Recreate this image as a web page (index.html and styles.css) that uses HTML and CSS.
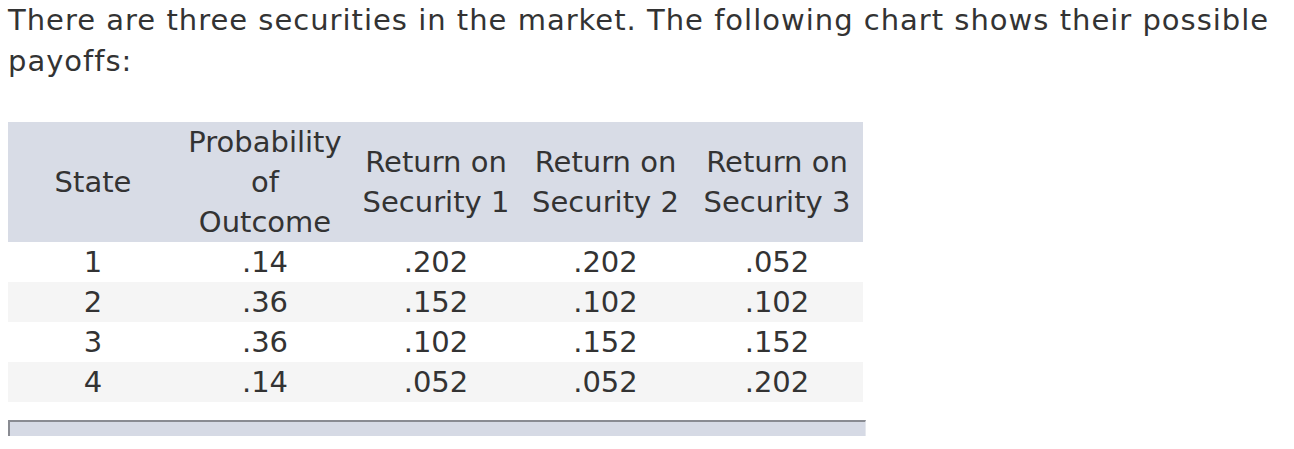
FILE: index.html
```html
<!DOCTYPE html>
<html>
<head>
<meta charset="utf-8">
<link rel="stylesheet" href="styles.css">
</head>
<body>
<p class="intro">There are three securities in the market. The following chart shows their possible payoffs:</p>
<table class="payoffs">
  <thead>
    <tr>
      <th class="c1">State</th>
      <th class="c2">Probability<br>of<br>Outcome</th>
      <th class="c3">Return on<br>Security 1</th>
      <th class="c4">Return on<br>Security 2</th>
      <th class="c5">Return on<br>Security 3</th>
    </tr>
  </thead>
  <tbody>
    <tr><td>1</td><td>.14</td><td>.202</td><td>.202</td><td>.052</td></tr>
    <tr class="alt"><td>2</td><td>.36</td><td>.152</td><td>.102</td><td>.102</td></tr>
    <tr><td>3</td><td>.36</td><td>.102</td><td>.152</td><td>.152</td></tr>
    <tr class="alt"><td>4</td><td>.14</td><td>.052</td><td>.052</td><td>.202</td></tr>
  </tbody>
</table>
<div class="bar"></div>
</body>
</html>
```
FILE: styles.css
```css
html, body {
  margin: 0;
  padding: 0;
  background: #fff;
}
body {
  padding: 0 8px;
  font-family: "DejaVu Sans", "Liberation Sans", sans-serif;
  color: #333;
  font-size: 29px;
}
.intro {
  margin: 0;
  line-height: 41px;
  letter-spacing: 1px;
}
.payoffs {
  margin-top: 40px;
  border-collapse: collapse;
  width: 855px;
  table-layout: fixed;
}
.payoffs th {
  background: #d8dce6;
  font-weight: normal;
  line-height: 40px;
  padding: 0;
  text-align: center;
  vertical-align: middle;
}
.payoffs .c1 { width: 170px; }
.payoffs .c2 { width: 174px; }
.payoffs .c3 { width: 168px; }
.payoffs .c4 { width: 171px; }
.payoffs .c5 { width: 172px; }
.payoffs td {
  height: 40px;
  line-height: 40px;
  padding: 0;
  text-align: center;
}
.payoffs tr.alt td {
  background: #f5f5f5;
}
.bar {
  margin-top: 18px;
  width: 855px;
  height: 14px;
  background: #d6dae5;
  border-top: 2px solid #898b92;
  border-left: 2px solid #898b92;
  border-right: 1px solid #e6e8ee;
}
```
